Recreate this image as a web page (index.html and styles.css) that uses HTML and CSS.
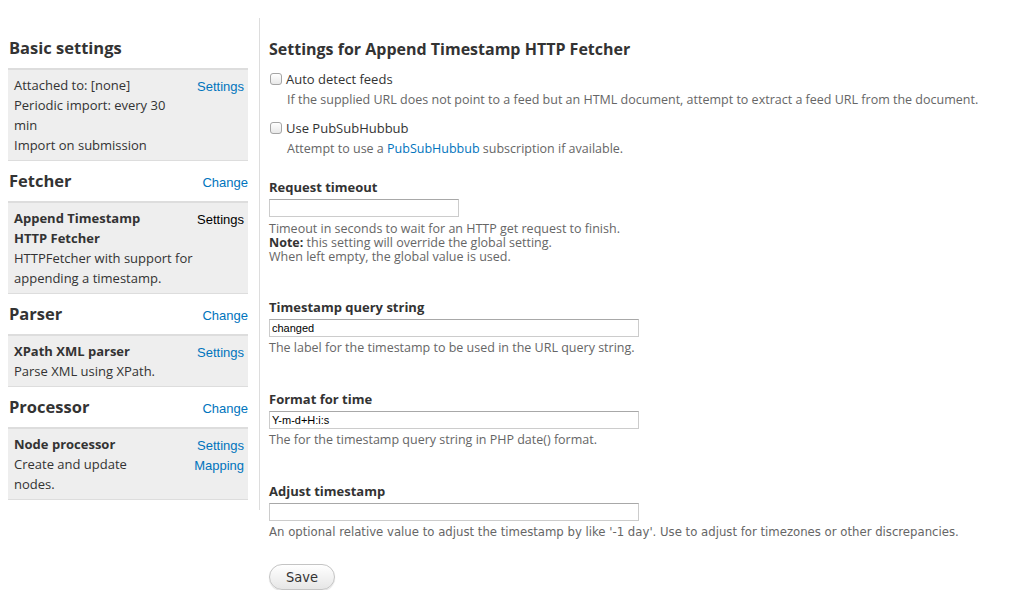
FILE: index.html
```html
<!DOCTYPE html>
<html lang="en">
<head>
    <meta charset="UTF-8">
    <meta name="viewport" content="width=device-width, initial-scale=1.0">
    <title>Settings for Append Timestamp HTTP Fetcher</title>
    <link rel="stylesheet" href="styles.css">
</head>
<body>
    <div class="page">
        <div class="sidebar">
            <div class="section-head">
                <h2>Basic settings</h2>
            </div>
            <div class="box">
                <div class="box-links"><a href="#">Settings</a></div>
                <div class="box-text narrow">Attached to: [none]<br>Periodic import: every 30 min<br>Import on submission</div>
            </div>

            <div class="section-head">
                <h2>Fetcher</h2>
                <a href="#">Change</a>
            </div>
            <div class="box">
                <div class="box-links"><span class="current">Settings</span></div>
                <div class="box-title">Append Timestamp HTTP Fetcher</div>
                <div class="box-text">HTTPFetcher with support for appending a timestamp.</div>
            </div>

            <div class="section-head">
                <h2>Parser</h2>
                <a href="#">Change</a>
            </div>
            <div class="box">
                <div class="box-links"><a href="#">Settings</a></div>
                <div class="box-title">XPath XML parser</div>
                <div class="box-text">Parse XML using XPath.</div>
            </div>

            <div class="section-head">
                <h2>Processor</h2>
                <a href="#">Change</a>
            </div>
            <div class="box">
                <div class="box-links"><a href="#">Settings</a><a href="#">Mapping</a></div>
                <div class="box-title">Node processor</div>
                <div class="box-text narrower">Create and update nodes.</div>
            </div>
        </div>

        <form class="content">
            <h1>Settings for Append Timestamp HTTP Fetcher</h1>

            <div class="check-item">
                <label class="check-label"><input type="checkbox"> Auto detect feeds</label>
                <div class="description">If the supplied URL does not point to a feed but an HTML document, attempt to extract a feed URL from the document.</div>
            </div>
            <div class="check-item">
                <label class="check-label"><input type="checkbox"> Use PubSubHubbub</label>
                <div class="description">Attempt to use a <a href="#">PubSubHubbub</a> subscription if available.</div>
            </div>

            <div class="form-item first">
                <label for="timeout">Request timeout</label>
                <input type="text" id="timeout" class="short">
                <div class="description">Timeout in seconds to wait for an HTTP get request to finish.<br><strong>Note:</strong> this setting will override the global setting.<br>When left empty, the global value is used.</div>
            </div>

            <div class="form-item">
                <label for="query">Timestamp query string</label>
                <input type="text" id="query" value="changed">
                <div class="description">The label for the timestamp to be used in the URL query string.</div>
            </div>

            <div class="form-item">
                <label for="format">Format for time</label>
                <input type="text" id="format" value="Y-m-d+H:i:s">
                <div class="description">The for the timestamp query string in PHP date() format.</div>
            </div>

            <div class="form-item">
                <label for="adjust">Adjust timestamp</label>
                <input type="text" id="adjust">
                <div class="description narrow-font">An optional relative value to adjust the timestamp by like '-1 day'. Use to adjust for timezones or other discrepancies.</div>
            </div>

            <button type="submit">Save</button>
        </form>
    </div>
</body>
</html>
```

FILE: styles.css
```css
body {
    margin: 0;
    font-family: "Open Sans", "DejaVu Sans", sans-serif;
    font-size: 13px;
    color: #333;
    background: #fff;
}
a {
    color: #0074bd;
    text-decoration: none;
}
.page {
    display: flex;
    align-items: flex-start;
    padding-top: 18px;
}
.sidebar {
    width: 240px;
    padding: 10px 11px 10px 8px;
    border-right: 1px solid #ddd;
}
.section-head {
    display: flex;
    justify-content: space-between;
    align-items: baseline;
    height: 40px;
    line-height: 40px;
}
.section-head h2 {
    margin: 0 0 0 1px;
    font-size: 16.5px;
    font-weight: bold;
    color: #333;
}
.section-head a,
.box-links a,
.box-links .current {
    font-family: "Liberation Sans", Arial, sans-serif;
    font-size: 13px;
}
.box {
    background: #eee;
    border-top: 2px solid #ddd;
    border-bottom: 1px solid #ddd;
    padding: 5px 4px 5px 6px;
    line-height: 20px;
}
.box::after {
    content: "";
    display: block;
    clear: both;
}
.box-links {
    float: right;
    display: flex;
    flex-direction: column;
    align-items: flex-end;
    margin-left: 8px;
    padding-top: 2px;
    line-height: 20px;
}
.box-links .current {
    color: #000;
}
.box-title {
    font-weight: bold;
    max-width: 160px;
}
.box-text.narrow {
    max-width: 170px;
}
.box-text.narrower {
    max-width: 130px;
}
.content {
    padding: 21px 0 0 9px;
}
.content h1 {
    margin: 0;
    font-size: 16px;
    line-height: 20px;
    font-weight: bold;
}
.check-item {
    margin-top: 10px;
}
.check-item + .check-item {
    margin-top: 8px;
}
.check-label {
    display: flex;
    align-items: center;
    gap: 4px;
    line-height: 20px;
    font-size: 13px;
}
.check-label input {
    appearance: none;
    -webkit-appearance: none;
    width: 12px;
    height: 12px;
    margin: 0 0 0 1px;
    border: 1px solid #a5a5a5;
    border-radius: 3px;
    background: linear-gradient(#fff, #e8e8e8);
}
.check-item .description {
    margin: 1px 0 0 18px;
    line-height: 20px;
}
.description {
    font-size: 12.5px;
    line-height: 14px;
    color: #666;
}
.description strong {
    color: #333;
}
.form-item {
    margin-top: 34px;
}
.form-item.first {
    margin-top: 18px;
}
.form-item.first + .form-item {
    margin-top: 33px;
}
.form-item label {
    display: block;
    font-weight: bold;
    font-size: 13px;
    line-height: 20px;
    margin-bottom: 2px;
}
.form-item input {
    display: block;
    box-sizing: border-box;
    width: 370px;
    height: 18px;
    padding: 0 2px;
    border: 1px solid #ccc;
    border-top-color: #a8a8a8;
    font-family: "Liberation Sans", Arial, sans-serif;
    font-size: 11px;
    color: #000;
}
.form-item input.short {
    width: 190px;
}
.form-item .description {
    margin-top: 4px;
}
.form-item.first .description {
    margin-top: 5px;
}
.description.narrow-font {
    font-family: "Liberation Sans Narrow", "DejaVu Sans Condensed", "Liberation Sans", sans-serif;
    font-stretch: condensed;
    font-size: 13px;
}
button {
    margin-top: 25px;
    width: 66px;
    height: 26px;
    border: 1px solid #c4c4c4;
    border-radius: 13px;
    background: linear-gradient(#fff, #e6e6e6);
    box-shadow: 0 1px 1px rgba(0,0,0,0.12);
    font-family: "Liberation Sans Narrow", "DejaVu Sans Condensed", "Liberation Sans", sans-serif;
    font-stretch: condensed;
    font-size: 14.5px;
    color: #333;
    cursor: pointer;
}
```
